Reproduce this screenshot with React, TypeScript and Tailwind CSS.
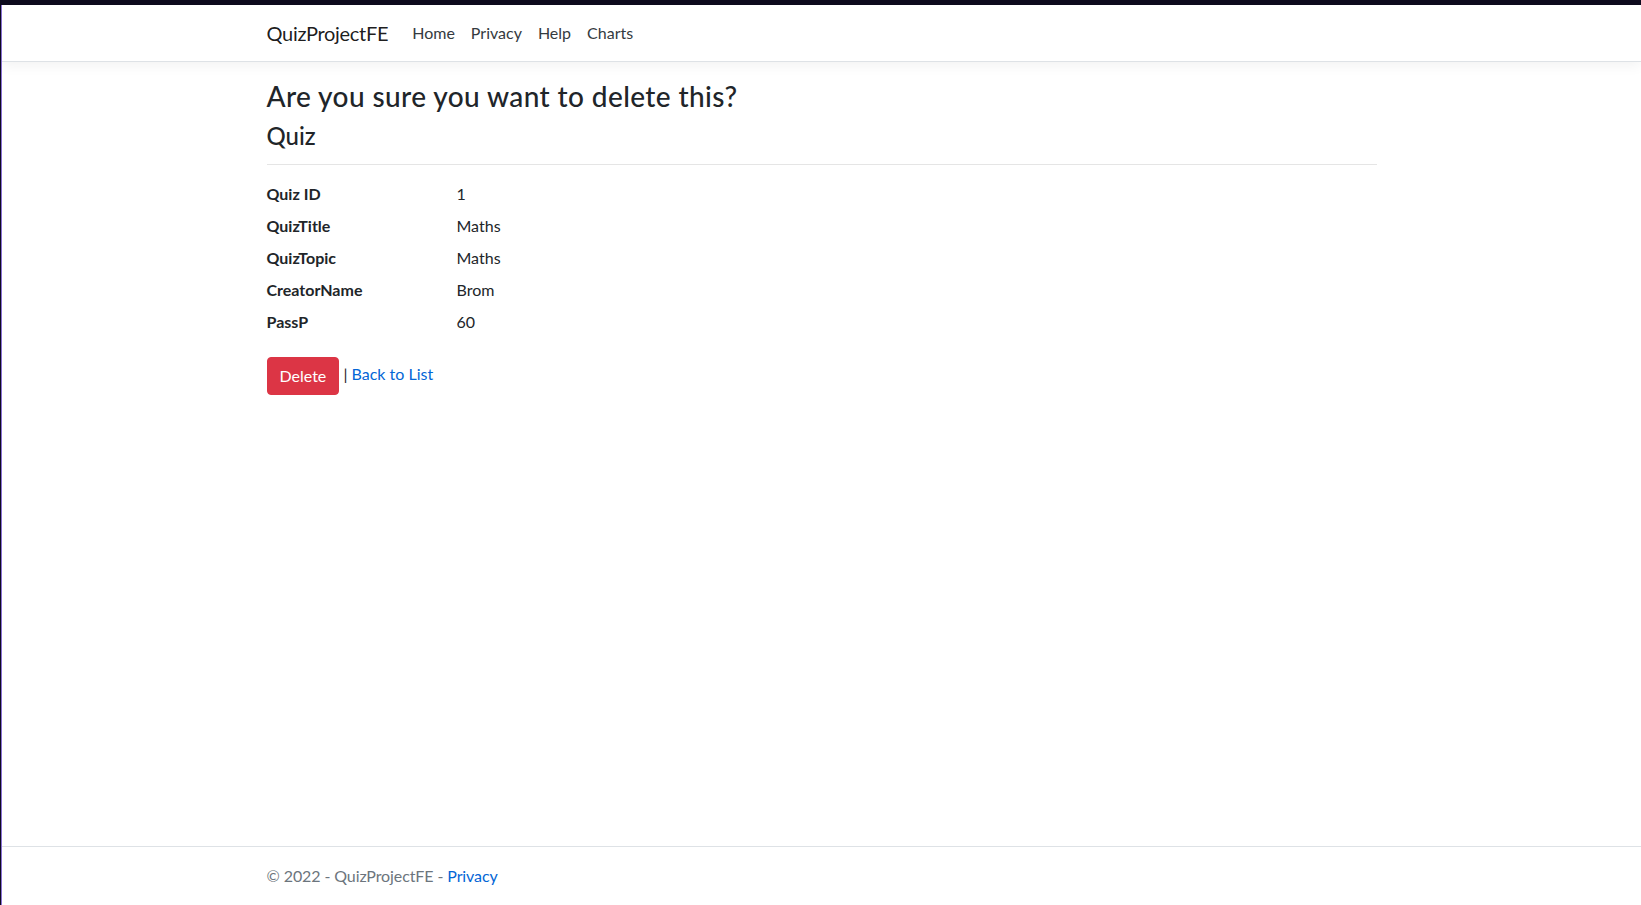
import React from "react";

export default function App() {
  const rows: [string, string][] = [
    ["Quiz ID", "1"],
    ["QuizTitle", "Maths"],
    ["QuizTopic", "Maths"],
    ["CreatorName", "Brom"],
    ["PassP", "60"],
  ];
  return (
    <div className="h-screen flex flex-col bg-white text-[#212529] text-base leading-6 font-['Lato','Liberation_Sans',sans-serif]">
      <div className="h-[5px] bg-[#0e0b1e] shrink-0" />
      <div className="flex flex-1 min-h-0">
        <div className="w-px bg-[#0e0b1e] shrink-0" />
        <div className="w-px bg-[#8a72d6] shrink-0" />
        <div className="flex-1 flex flex-col min-w-0">
          <nav className="bg-white border-b border-[#dee2e6] shadow-[0_4px_12px_rgba(0,0,0,0.05)] px-4 py-2 shrink-0">
            <div className="max-w-[1140px] mx-auto px-[15px] flex items-center">
              <a className="text-[20px] leading-[30px] py-[5px] mr-4 text-black/90 tracking-[-0.3px]">QuizProjectFE</a>
              <ul className="flex">
                {["Home", "Privacy", "Help", "Charts"].map((l) => (
                  <li key={l}>
                    <a className="block px-2 py-2 text-[#343a40]">{l}</a>
                  </li>
                ))}
              </ul>
            </div>
          </nav>
          <main className="w-full max-w-[1140px] mx-auto px-[15px] mt-4 pb-4">
            <h3 className="text-[28px] leading-[1.2] font-medium pt-[2px] mb-[6px] tracking-[0.4px]">Are you sure you want to delete this?</h3>
            <div>
              <h4 className="text-[24px] leading-[1.2] font-medium pt-[2px]">Quiz</h4>
              <hr className="mt-[14px] mb-4 border-t border-black/10" />
              <dl className="grid grid-cols-[190px_1fr] -mx-[15px] mb-4 pt-px">
                {rows.map(([k, v]) => (
                  <React.Fragment key={k}>
                    <dt className="px-[15px] font-bold">{k}</dt>
                    <dd className="px-[15px] mb-2">{v}</dd>
                  </React.Fragment>
                ))}
              </dl>
              <div className="-mt-px">
                <button className="bg-[#dc3545] border border-[#dc3545] text-white rounded-[4px] px-3 py-[6px] leading-6 text-base align-middle">Delete</button>{" "}
                | <a className="text-[#0366d6]">Back to List</a>
              </div>
            </div>
          </main>
          <footer className="mt-auto border-t border-[#dee2e6] text-[#6c757d] leading-[58px] whitespace-nowrap shrink-0">
            <div className="max-w-[1140px] mx-auto px-[15px] tracking-[-0.1px]">
              © 2022 - QuizProjectFE - <a className="text-[#0366d6]">Privacy</a>
            </div>
          </footer>
        </div>
      </div>
    </div>
  );
}
